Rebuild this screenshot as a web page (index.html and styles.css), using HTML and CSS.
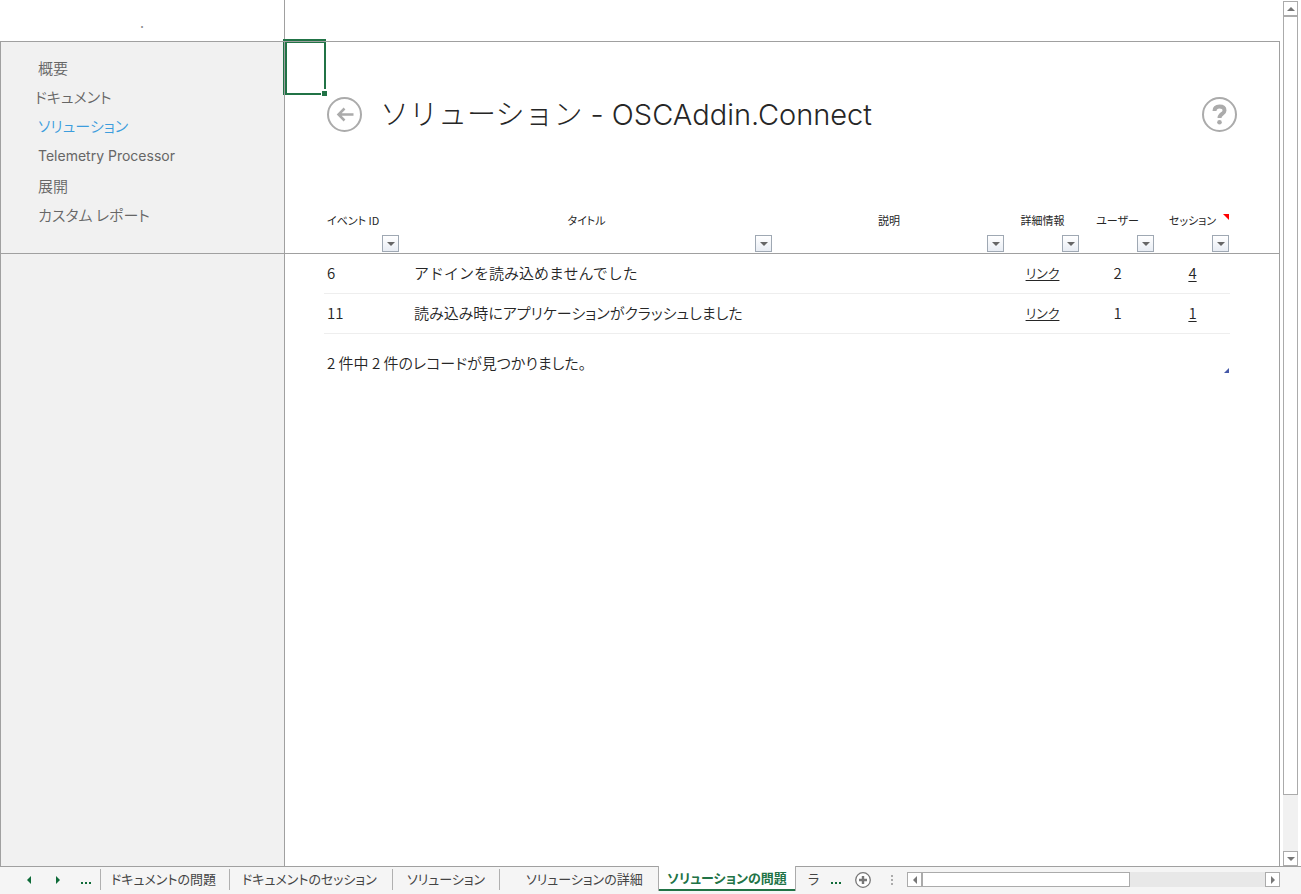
FILE: index.html
```html
<!DOCTYPE html>
<html lang="ja">
<head>
<meta charset="utf-8">
<title>ソリューション - OSCAddin.Connect</title>
<link rel="stylesheet" href="styles.css">
</head>
<body>
<div class="workspace">
  <div class="sheet">
    <div class="top-left">.</div>
    <div class="top-right"></div>
    <aside class="side">
      <nav class="menu">
        <a href="#">概要</a>
        <a href="#" class="outdent">ドキュメント</a>
        <a href="#" class="current">ソリューション</a>
        <a href="#" class="latin">Telemetry Processor</a>
        <a href="#">展開</a>
        <a href="#">カスタム レポート</a>
      </nav>
    </aside>
    <main class="content">
      <svg class="selection" width="44" height="57" viewBox="0 0 44 57" aria-hidden="true">
        <path d="M0 0h43v50h-2V4H4v50h34v2H0z" fill="#217346"/>
        <path d="M0 2.500h44M1.500 2v55" stroke="#a0a0a0" fill="none"/>
        <path d="M39 52h5v5h-5z" fill="#217346"/>
      </svg>
      <header class="heading">
        <button class="round" aria-label="戻る">
          <svg width="35" height="35" viewBox="0 0 35 35"><circle cx="17.500" cy="17.500" r="16.500" fill="none" stroke="#ababab" stroke-width="2"/><path d="M26.500 17.500H11.500M17.500 11.500l-6 6 6 6" fill="none" stroke="#ababab" stroke-width="2.500"/></svg>
        </button>
        <h1>ソリューション - OSCAddin.Connect</h1>
        <button class="round" aria-label="ヘルプ">
          <svg width="35" height="35" viewBox="0 0 35 35"><circle cx="17.500" cy="17.500" r="16.500" fill="none" stroke="#ababab" stroke-width="2"/><path d="M12.500 14c0-3.200 2-4.500 5-4.500 3.100 0 5 1.400 5 3.900 0 3.800-5 3.400-5 7.600" fill="none" stroke="#ababab" stroke-width="4"/><circle cx="17.500" cy="25.200" r="2.300" fill="#ababab"/></svg>
        </button>
      </header>
      <table>
        <colgroup><col class="c-left"><col class="c-id"><col><col class="c-desc"><col class="c-num"><col class="c-num"><col class="c-num"><col class="c-right"></colgroup>
        <thead>
          <tr>
            <td></td>
            <th scope="col" class="first"><span>イベント ID</span><button aria-label="イベント ID で絞り込み"></button></th>
            <th scope="col"><span>タイトル</span><button aria-label="タイトルで絞り込み"></button></th>
            <th scope="col"><span>説明</span><button aria-label="説明で絞り込み"></button></th>
            <th scope="col"><span>詳細情報</span><button aria-label="詳細情報で絞り込み"></button></th>
            <th scope="col"><span>ユーザー</span><button aria-label="ユーザーで絞り込み"></button></th>
            <th scope="col" class="noted"><span>セッション</span><button aria-label="セッションで絞り込み"></button></th>
            <td></td>
          </tr>
        </thead>
        <tbody>
          <tr><td></td><td>6</td><td class="name wide">アドインを読み込めませんでした</td><td></td><td class="mid link"><a href="#">リンク</a></td><td class="mid">2</td><td class="mid"><a href="#">4</a></td><td></td></tr>
          <tr><td></td><td>11</td><td class="name">読み込み時にアプリケーションがクラッシュしました</td><td></td><td class="mid link"><a href="#">リンク</a></td><td class="mid">1</td><td class="mid"><a href="#">1</a></td><td></td></tr>
        </tbody>
        <tfoot>
          <tr><td></td><td colspan="6" class="count">2 件中 2 件のレコードが見つかりました。</td><td></td></tr>
        </tfoot>
      </table>
    </main>
  </div>
  <div class="vscroll">
    <button class="arrow up" aria-label="上へ"></button>
    <div class="vthumb"></div>
    <div class="vtrack"></div>
    <button class="arrow down" aria-label="下へ"></button>
  </div>
</div>
<footer class="tabbar">
  <div class="tabnav">
    <button class="step prev" aria-label="前のシート"></button>
    <button class="step next" aria-label="次のシート"></button>
    <button class="more" aria-label="シート一覧"><i></i><i></i><i></i></button>
  </div>
  <div class="tabs">
    <button class="tab t1">ドキュメントの問題</button>
    <button class="tab t2">ドキュメントのセッション</button>
    <button class="tab t3">ソリューション</button>
    <button class="tab t4">ソリューションの詳細</button>
    <button class="tab active">ソリューションの問題</button>
    <button class="tab cut">ラ</button>
  </div>
  <button class="more" aria-label="続きのシート"><i></i><i></i><i></i></button>
  <button class="add" aria-label="新しいシート">
    <svg width="16" height="16" viewBox="0 0 16 16"><circle cx="8" cy="8" r="7.300" fill="#fff" stroke="#777" stroke-width="1.300"/><path d="M8 4v8M4 8h8" stroke="#777" stroke-width="2.400"/></svg>
  </button>
  <div class="grip"><i></i><i></i><i></i></div>
  <div class="hscroll">
    <button class="arrow left" aria-label="左へ"></button>
    <div class="hthumb"></div>
    <div class="htrack"></div>
    <button class="arrow right" aria-label="右へ"></button>
  </div>
</footer>
</body>
</html>
```

FILE: styles.css
```css
* { box-sizing: border-box; }
body {
  margin: 0;
  height: 100vh;
  display: flex;
  flex-direction: column;
  overflow: hidden;
  background: #fff;
  color: #262626;
  font: 350 15px/20px "Noto Sans CJK JP", "Noto Sans", sans-serif;
  font-feature-settings: "palt";
}
button {
  font: inherit;
  color: inherit;
  padding: 0;
  border: 0;
  background: none;
}
a { color: inherit; }
svg { display: block; }

.workspace { flex: 1; min-height: 0; display: flex; }
.sheet {
  flex: 1;
  display: grid;
  grid-template-columns: 285px 1fr;
  grid-template-rows: 41px 1fr;
}
.top-left {
  border-right: 1px solid #a0a0a0;
  text-align: center;
  color: #888;
  padding-top: 12px;
}
.side {
  background: #f1f1f1;
  border: 1px solid #a0a0a0;
  border-bottom: 0;
}
.menu {
  display: flex;
  flex-direction: column;
  gap: 9px;
  height: 212px;
  padding: 16px 0 0 37px;
  border-bottom: 1px solid #a0a0a0;
  color: #666;
}
.menu a { text-decoration: none; }
.menu .outdent { margin-left: -3px; }
.menu .current { color: #3c9ddd; }
.menu .latin {
  font-family: Inter, "Liberation Sans", sans-serif;
  font-size: 14px;
  line-height: 22px;
  font-weight: 400;
}

.content {
  position: relative;
  border-top: 1px solid #a0a0a0;
  border-right: 1px solid #a0a0a0;
}
.selection { position: absolute; left: -2px; top: -3px; }
.heading {
  display: flex;
  align-items: center;
  height: 169px;
  padding: 0 42px 24px;
}
.round { flex: none; width: 35px; height: 35px; }
h1 {
  flex: 1;
  margin: 0 0 0 18px;
  font-family: Inter, "Noto Sans CJK JP", sans-serif;
  font-size: 29px;
  line-height: 36px;
  font-weight: 300;
  font-feature-settings: normal;
}

table {
  width: 100%;
  table-layout: fixed;
  border-collapse: separate;
  border-spacing: 0;
}
.c-left { width: 39px; }
.c-id { width: 76px; }
.c-desc { width: 232px; }
.c-num { width: 75px; }
.c-right { width: 49px; }
th, td { padding: 0 3px; text-align: left; }
thead th, thead td { border-bottom: 1px solid #a0a0a0; }
th {
  padding: 0 1px 1px;
  font-size: 11px;
  line-height: 18px;
  font-weight: 400;
  text-align: center;
}
th.first span { text-align: left; padding-left: 2px; }
th span { display: block; height: 24px; }
th button {
  display: grid;
  place-items: center;
  width: 17px;
  height: 17px;
  margin-left: auto;
  border: 1px solid #9fa8b3;
  background: linear-gradient(#fff, #e9edf4);
}
th button::after {
  content: "";
  border: 4px solid transparent;
  border-top-color: #666;
  border-bottom: 0;
}
.noted { position: relative; }
.noted::before {
  content: "";
  position: absolute;
  top: 3px;
  right: 1px;
  border-top: 6px solid #f00;
  border-left: 6px solid transparent;
}
tbody td { height: 40px; padding-bottom: 2px; }
tbody td:not(:first-child):not(:last-child) { border-bottom: 1px solid #eee; }
.name { padding-left: 14px; white-space: nowrap; }
.wide { font-feature-settings: normal; }
.mid { text-align: center; }
.link { font-size: 13px; }
tbody a { text-underline-offset: 2px; }
.count {
  position: relative;
  height: 40px;
  padding-top: 18px;
}
.count::after {
  content: "";
  position: absolute;
  right: 1px;
  bottom: 1px;
  border-bottom: 5px solid #4558a8;
  border-left: 5px solid transparent;
}

.arrow {
  display: grid;
  place-items: center;
  flex: none;
  width: 15px;
  height: 15px;
  border: 1px solid #ababab;
  background: #fff;
}
.arrow::after { content: ""; border: 4px solid transparent; }
.up::after { border-bottom-color: #777; border-top: 0; }
.down::after { border-top-color: #777; border-bottom: 0; }
.left::after { border-right-color: #777; border-left: 0; }
.right::after { border-left-color: #777; border-right: 0; }
.vscroll {
  display: flex;
  flex-direction: column;
  width: 21px;
  padding: 1px 3px 0;
}
.vthumb { flex: 781; border: 1px solid #ababab; background: #fff; }
.vtrack { flex: 56; background: #f1f1f1; }

.tabbar {
  display: flex;
  align-items: center;
  height: 28px;
  background: #f5f5f5;
  border-top: 1px solid #a0a0a0;
  padding: 0 21px 2px 0;
  font-size: 13px;
  font-weight: 400;
  color: #444;
}
.tabnav { display: flex; align-items: center; width: 100px; padding-left: 27px; }
.step { width: 4px; height: 8px; border: 4px solid transparent; }
.prev { border-right-color: #0e6b38; border-left: 0; margin-right: 25px; }
.next { border-left-color: #0e6b38; border-right: 0; margin-right: 21px; }
.more { display: flex; gap: 2px; margin-top: 7px; }
.more i { width: 2px; height: 2px; background: #0e6b38; }
.tabs { display: flex; align-self: stretch; }
.tab {
  height: 23px;
  border: solid;
  border-image: linear-gradient(transparent 3px, #b0b0b0 3px) 1;
  border-width: 0 0 0 1px;
  white-space: nowrap;
  text-align: left;
}
.t1 { width: 129px; padding-left: 10px; }
.t2 { width: 163px; padding-left: 12px; }
.t3 { width: 107px; padding-left: 14px; }
.t4 { width: 159px; padding-left: 26px; }
.tab.active {
  width: 138px;
  height: 25px;
  margin-top: -1px;
  padding-bottom: 1px;
  background: #fff;
  border: solid #ababab;
  border-width: 0 1px;
  box-shadow: inset 0 -2px #217346;
  text-align: center;
  font-weight: 700;
  color: #217346;
}
.tab.cut { width: 35px; padding-left: 12px; border: 0; }
.add { margin-left: 14px; }
.grip { display: grid; gap: 2px; margin-left: 20px; }
.grip i { width: 2px; height: 2px; background: #ababab; }
.hscroll { flex: 1; display: flex; margin-left: 14px; }
.hthumb { flex: 207; border: 1px solid #ababab; background: #fff; }
.htrack { flex: 136; background: #e8e8e8; }
```
